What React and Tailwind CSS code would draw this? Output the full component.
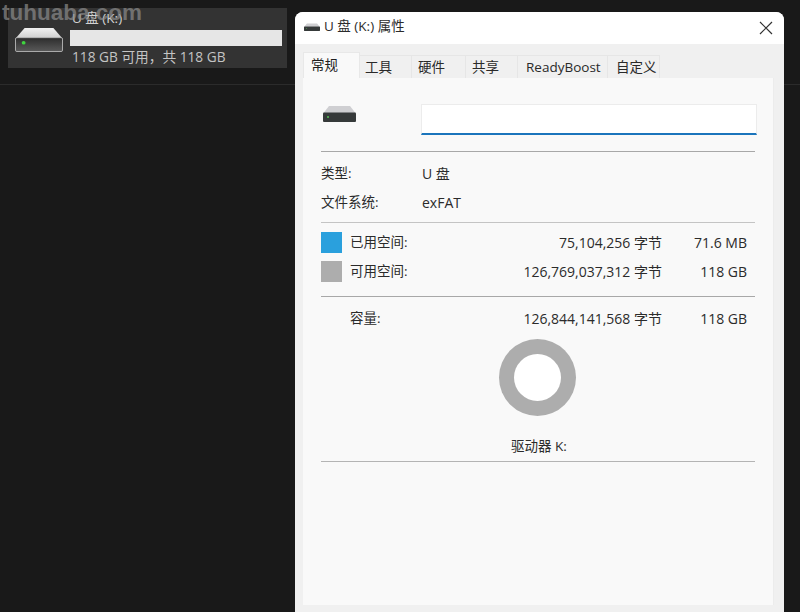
const cjk = { fontFamily: '"Open Sans","Noto Sans CJK SC","Noto Sans",sans-serif' };

function DriveLarge() {
  return (
    <svg width="48" height="25" viewBox="0 0 50 27" preserveAspectRatio="none" className="block">
      <defs>
        <linearGradient id="dt" x1="0" y1="0" x2="0" y2="1">
          <stop offset="0" stopColor="#f2f2f2" />
          <stop offset="1" stopColor="#cfcfcf" />
        </linearGradient>
        <linearGradient id="db" x1="0" y1="0" x2="0" y2="1">
          <stop offset="0" stopColor="#2c2c2c" />
          <stop offset="1" stopColor="#5a5a5a" />
        </linearGradient>
      </defs>
      <path d="M1 12 L10 1 H40 L49 12 Z" fill="url(#dt)" />
      <rect x="0.5" y="11.5" width="49" height="15" rx="1.5" fill="url(#db)" stroke="#b5b5b5" />
      <circle cx="9" cy="17" r="2" fill="#3fd43f" />
    </svg>
  );
}

function DriveSmall({ w = 33, h = 17 }) {
  return (
    <svg width={w} height={h} viewBox="0 0 33 17" preserveAspectRatio="none" className="block">
      <path d="M0.5 8 L6 1 H27 L32.5 8 Z" fill="#cfcfd2" />
      <rect x="0" y="7.5" width="33" height="9.5" rx="1" fill="#363a3a" />
      <circle cx="5" cy="12" r="1" fill="#55c055" />
    </svg>
  );
}

function ActiveTab({ label }) {
  return (
    <div className="w-[57px] h-[26px] bg-[#f9f9f9] border border-b-0 border-[#e8e8e8] pl-[7px] pt-[2px] text-[13.5px] leading-[20px] text-[#1f1f1f]">
      {label}
    </div>
  );
}

function Tab({ label, className }) {
  return (
    <div className={`h-[23px] bg-[#f0f0f0] border-t border-r border-[#e6e6e6] flex items-center text-[13.5px] leading-[20px] text-[#2a2a2a] ${className}`}>
      {label}
    </div>
  );
}

function Rule({ className }) {
  return <div className={`h-px ${className}`} />;
}

function SpaceRow({ swatch, label, bytes, size, className }) {
  return (
    <div className={`flex items-center h-[21px] text-[14px] text-[#2b2b2b] pr-[8px] ${className}`}>
      <div className={`w-[21px] h-[21px] shrink-0 ${swatch}`} />
      <div className="ml-[8px] flex-1 text-[13.5px]">{label}</div>
      <div className="w-[200px] text-right">{bytes}</div>
      <div className="w-[85px] text-right">{size}</div>
    </div>
  );
}

export default function App() {
  return (
    <div className="relative w-[800px] h-[612px] overflow-hidden bg-[#191919]" style={cjk}>
      <div className="h-[85px] border-b border-[#2b2b2b] pt-[8px] pl-[8px]">
        <div className="w-[279px] h-[60px] bg-[#333333] flex items-center pl-[7px]">
          <div className="mt-[3px]">
            <DriveLarge />
          </div>
          <div className="ml-[7px] w-[212px] -mt-[1px]">
            <div className="pl-[2px] text-[13.5px] leading-[18px] text-[#d2d2d2]">U 盘 (K:)</div>
            <div className="h-[16px] bg-[#e6e6e6] mt-[3px] mb-[1px]" />
            <div className="pl-[2px] text-[13.7px] leading-[20px] text-[#c4c4c4]">118 GB 可用，共 118 GB</div>
          </div>
        </div>
      </div>

      <div
        className="absolute left-[2px] top-0 text-[22.5px] leading-[26px] font-bold text-[#8c8c8c]/70"
        style={{ fontFamily: '"Liberation Sans",sans-serif' }}
      >
        tuhuaba.com
      </div>

      <div className="absolute left-[295px] top-[12px] w-[489px] h-[600px] bg-[#f0f0f0] rounded-t-[8px] flex flex-col overflow-hidden">
        <div className="h-[32px] shrink-0 bg-white flex items-center pl-[9px] pr-[11px] pb-[3px]">
          <DriveSmall w={16} h={8} />
          <span className="ml-[4px] text-[13.5px] text-[#2b2b2b]">U 盘 (K:) 属性</span>
          <svg width="14" height="14" viewBox="0 0 14 14" className="ml-auto mt-[3px]" fill="none" stroke="#333" strokeWidth="1.2">
            <path d="M1 1 L13 13 M13 1 L1 13" />
          </svg>
        </div>

        <div className="flex items-end h-[34px] shrink-0 pl-[8px]">
          <ActiveTab label="常规" />
          <Tab label="工具" className="w-[52px] pl-[5px]" />
          <Tab label="硬件" className="w-[54px] pl-[6px]" />
          <Tab label="共享" className="w-[52px] pl-[6px]" />
          <Tab label="ReadyBoost" className="w-[90px] pl-[8px]" />
          <Tab label="自定义" className="w-[52px] pl-[8px]" />
        </div>

        <div className="mx-[8px] w-[471px] h-[527px] shrink-0 bg-[#f9f9f9] border-r border-[#ececec] pl-[18px] pr-[18px] text-[14px] text-[#2b2b2b]">
          <div className="flex items-start pt-[26px]">
            <div className="ml-[2px] mt-[1px] shrink-0">
              <DriveSmall />
            </div>
            <div className="ml-[65px] w-[336px] h-[31px] shrink-0 bg-white border border-[#ececec] border-b-2 border-b-[#1b75bc]" />
          </div>
          <Rule className="mt-[16px] bg-[#a8a8a8]" />
          <div className="flex items-center h-[20px] mt-[11px]">
            <div className="w-[101px] text-[13.5px]">类型:</div>
            <div>U 盘</div>
          </div>
          <div className="flex items-center h-[20px] mt-[9px]">
            <div className="w-[101px] text-[13.5px]">文件系统:</div>
            <div>exFAT</div>
          </div>
          <Rule className="mt-[10px] bg-[#c4c4c4]" />
          <SpaceRow swatch="bg-[#2aa0dd]" label="已用空间:" bytes="75,104,256 字节" size="71.6 MB" className="mt-[9px]" />
          <SpaceRow swatch="bg-[#adadad]" label="可用空间:" bytes="126,769,037,312 字节" size="118 GB" className="mt-[8px]" />
          <Rule className="mt-[14px] bg-[#a8a8a8]" />
          <SpaceRow swatch="bg-transparent" label="容量:" bytes="126,844,141,568 字节" size="118 GB" className="mt-[11px]" />
          <div className="flex justify-center mt-[10px] pr-[1px]">
            <div className="w-[77px] h-[77px] rounded-full bg-[#adadad] flex items-center justify-center">
              <div className="w-[47px] h-[47px] rounded-full bg-white" />
            </div>
          </div>
          <div className="text-center h-[20px] mt-[20px] pl-[2px] leading-[20px] text-[13.5px]">驱动器 K:</div>
          <Rule className="mt-[5px] bg-[#b4b4b4]" />
        </div>
      </div>
    </div>
  );
}
